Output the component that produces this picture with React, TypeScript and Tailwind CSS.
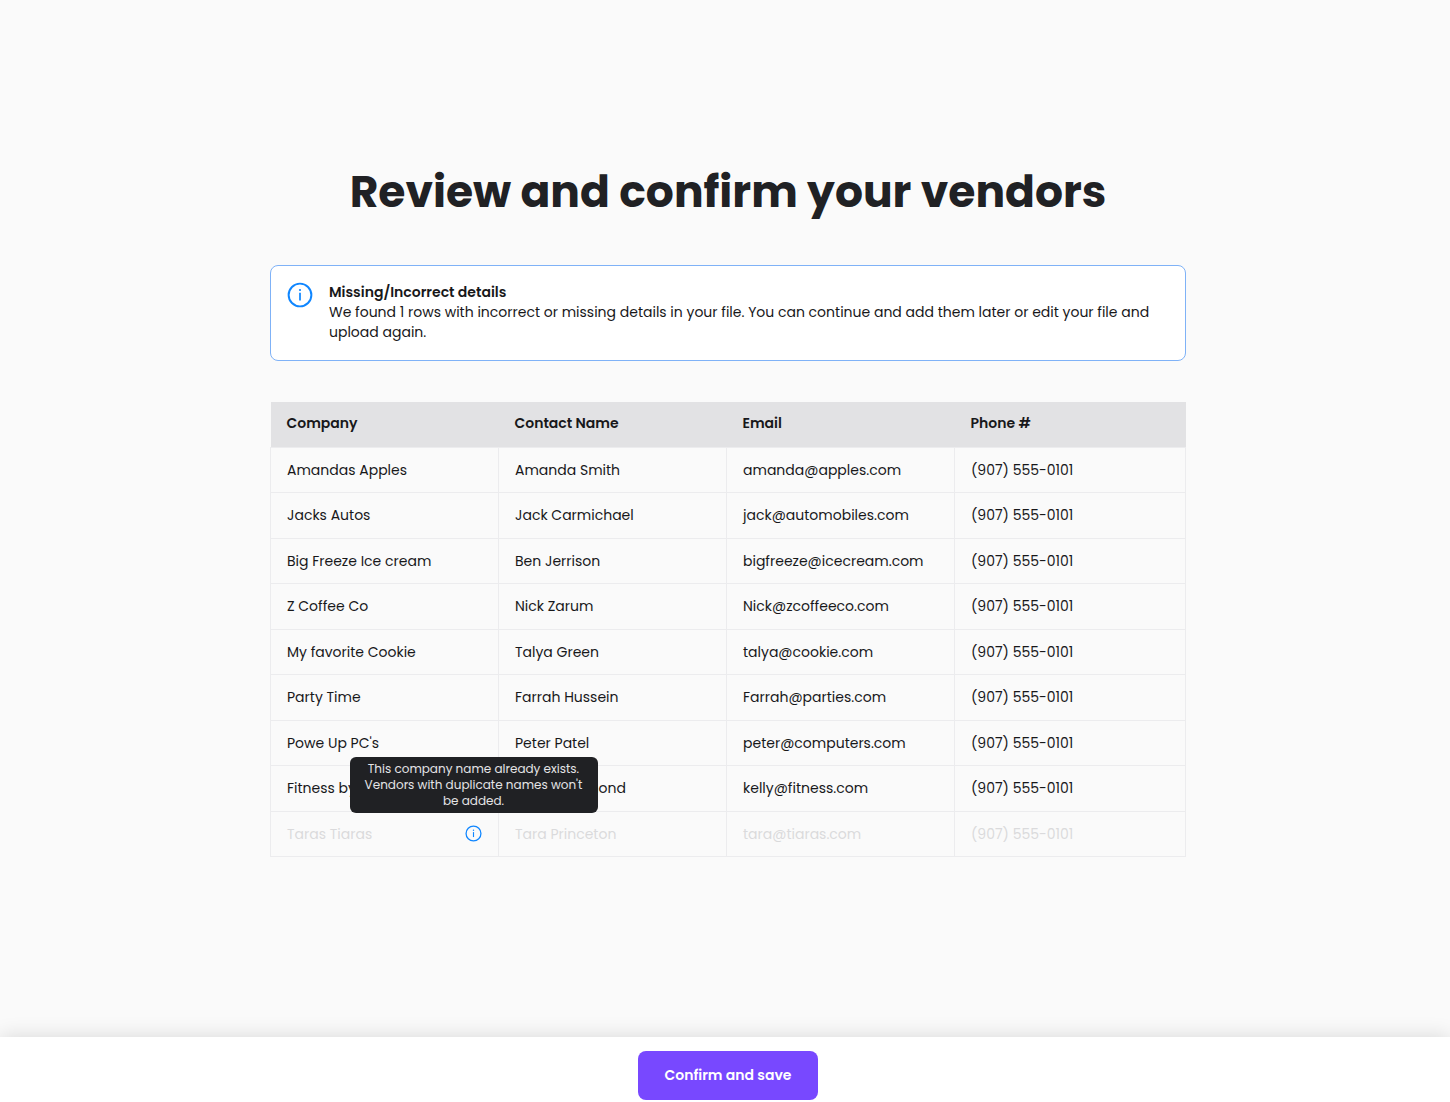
type Vendor = {
  company: string
  contact: string
  email: string
  phone: string
  duplicate?: boolean
}

const vendors: Vendor[] = [
  { company: 'Amandas Apples', contact: 'Amanda Smith', email: 'amanda@apples.com', phone: '(907) 555-0101' },
  { company: 'Jacks Autos', contact: 'Jack Carmichael', email: 'jack@automobiles.com', phone: '(907) 555-0101' },
  { company: 'Big Freeze Ice cream', contact: 'Ben Jerrison', email: 'bigfreeze@icecream.com', phone: '(907) 555-0101' },
  { company: 'Z Coffee Co', contact: 'Nick Zarum', email: 'Nick@zcoffeeco.com', phone: '(907) 555-0101' },
  { company: 'My favorite Cookie', contact: 'Talya Green', email: 'talya@cookie.com', phone: '(907) 555-0101' },
  { company: 'Party Time', contact: 'Farrah Hussein', email: 'Farrah@parties.com', phone: '(907) 555-0101' },
  { company: "Powe Up PC's", contact: 'Peter Patel', email: 'peter@computers.com', phone: '(907) 555-0101' },
  { company: 'Fitness by Kelly', contact: 'Kelly Hammond', email: 'kelly@fitness.com', phone: '(907) 555-0101' },
  { company: 'Taras Tiaras', contact: 'Tara Princeton', email: 'tara@tiaras.com', phone: '(907) 555-0101', duplicate: true },
]

const columns = ['Company', 'Contact Name', 'Email', 'Phone #']

function InfoIcon({ className }: { className: string }) {
  return (
    <svg viewBox="0 0 24 24" fill="none" stroke="#0f86ff" className={className} aria-hidden="true">
      <circle cx="12" cy="12" r="10.5" strokeWidth="1.8" />
      <path d="M12 10v7" strokeWidth="1.6" />
      <circle cx="12" cy="7.4" r="1" fill="#0f86ff" stroke="none" />
    </svg>
  )
}

function DuplicateHint() {
  return (
    <span className="relative flex">
      <button type="button" aria-label="Duplicate vendor" aria-describedby="duplicate-hint" className="block">
        <InfoIcon className="size-[17px]" />
      </button>
      <span
        id="duplicate-hint"
        role="tooltip"
        className="absolute bottom-full left-1/2 mb-3 w-62 -translate-x-1/2 rounded-md bg-[#202124] px-3 py-1 text-center text-xs leading-4 text-[#e4e4e6]"
      >
        This company name already exists. Vendors with duplicate names won't be added.
      </span>
    </span>
  )
}

export default function App() {
  return (
    <div className="flex min-h-screen flex-col bg-[#fafafa] font-[Poppins,Inter,sans-serif] text-sm leading-5 text-[#18181a]">
      <main className="flex-1 pt-40 pb-16 pl-1.5">
        <div className="mx-auto max-w-[916px]">
          <h1 className="text-center text-[44px] leading-16 font-bold whitespace-nowrap text-[#202124]">
            Review and confirm your vendors
          </h1>

          <div role="status" className="mt-[41px] flex gap-4 rounded-lg border border-[#7fb2f7] bg-white px-4 pt-4 pb-[18px]">
            <InfoIcon className="size-[26px] shrink-0" />
            <div>
              <h2 className="font-semibold">Missing/Incorrect details</h2>
              <p>
                We found 1 rows with incorrect or missing details in your file. You can continue and add them later or
                edit your file and upload again.
              </p>
            </div>
          </div>

          <table className="mt-[41px] w-full table-fixed border-collapse text-left">
            <thead>
              <tr className="h-[45px] bg-[#e2e2e4]">
                {columns.map(column => (
                  <th key={column} scope="col" className="w-[228px] px-4 pb-0.5 font-semibold last:w-auto">
                    {column}
                  </th>
                ))}
              </tr>
            </thead>
            <tbody>
              {vendors.map(vendor => (
                <tr
                  key={vendor.company}
                  className={vendor.duplicate ? 'h-[45px] text-[#dadadc]' : 'odd:h-[45px] even:h-[46px]'}
                >
                  <td className="border border-[#ececee] px-4">
                    <div className="flex items-center justify-between">
                      {vendor.company}
                      {vendor.duplicate && <DuplicateHint />}
                    </div>
                  </td>
                  <td className="border border-[#ececee] px-4">{vendor.contact}</td>
                  <td className="border border-[#ececee] px-4">{vendor.email}</td>
                  <td className="border border-[#ececee] px-4">{vendor.phone}</td>
                </tr>
              ))}
            </tbody>
          </table>
        </div>
      </main>

      <footer className="sticky bottom-0 flex justify-center bg-white pt-[14px] pb-0.5 pl-1.5 shadow-[0_0_20px_rgba(0,0,0,0.14)]">
        <button type="button" className="h-[49px] rounded-lg bg-[#7848ff] px-[26px] pb-0.5 font-semibold text-white">
          Confirm and save
        </button>
      </footer>
    </div>
  )
}
